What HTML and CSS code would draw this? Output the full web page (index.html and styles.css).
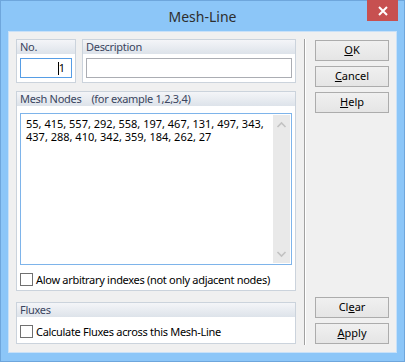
FILE: index.html
```html
<!DOCTYPE html>
<html>
<head>
<meta charset="utf-8">
<link rel="stylesheet" href="styles.css">
</head>
<body>
<div class="window">
  <div class="titlebar">
    <span class="title">Mesh-Line</span>
    <div class="close">
      <svg width="12" height="10" viewBox="0 0 12 10"><path d="M2 1 L10 9 M10 1 L2 9" stroke="#fff" stroke-width="2"/></svg>
    </div>
  </div>
  <div class="client">
    <div class="left">
      <div class="row-top">
        <div class="group g-no">
          <div class="ghead">No.</div>
          <div class="gbody">
            <div class="input focus"><span class="caret"></span>1</div>
          </div>
        </div>
        <div class="group g-desc">
          <div class="ghead">Description</div>
          <div class="gbody">
            <div class="input"></div>
          </div>
        </div>
      </div>
      <div class="group g-mesh">
        <div class="ghead">Mesh Nodes<span class="gap"></span>(for example 1,2,3,4)</div>
        <div class="gbody mesh-body">
          <div class="memo">
            <div class="memo-text">
              <div class="line">55, 415, 557, 292, 558, 197, 467, 131, 497, 343,</div>
              <div class="line">437, 288, 410, 342, 359, 184, 262, 27</div>
            </div>
            <div class="scroll">
              <svg width="17" height="12" viewBox="0 0 17 12"><path d="M4.5 8 L8.5 4 L12.5 8" stroke="#c2c2c2" stroke-width="1.6" fill="none"/></svg>
              <svg width="17" height="12" viewBox="0 0 17 12"><path d="M4.5 4 L8.5 8 L12.5 4" stroke="#c2c2c2" stroke-width="1.6" fill="none"/></svg>
            </div>
          </div>
          <label class="check"><span class="box"></span>Alow arbitrary indexes (not only adjacent nodes)</label>
        </div>
      </div>
      <div class="group g-flux">
        <div class="ghead">Fluxes</div>
        <div class="gbody flux-body">
          <label class="check"><span class="box"></span>Calculate Fluxes across this Mesh-Line</label>
        </div>
      </div>
    </div>
    <div class="sep"></div>
    <div class="buttons">
      <div class="btn"><u>O</u>K</div>
      <div class="btn"><u>C</u>ancel</div>
      <div class="btn"><u>H</u>elp</div>
      <div class="btn push">Cl<u>e</u>ar</div>
      <div class="btn"><u>A</u>pply</div>
    </div>
  </div>
</div>
</body>
</html>
```
FILE: styles.css
```css
* { box-sizing: border-box; }
html, body { margin: 0; padding: 0; }
body {
  font-family: "Noto Sans", "Open Sans", sans-serif;
  font-size: 11px;
  color: #000;
  background: #fff;
}
.window {
  width: 405px;
  height: 362px;
  background: #8cc6f8;
  border: 1px solid #6ea6dc;
  display: flex;
  flex-direction: column;
}
.titlebar {
  height: 30px;
  position: relative;
  display: flex;
  align-items: center;
  justify-content: center;
}
.title {
  font-size: 14px;
  color: #2e2e2e;
}
.close {
  position: absolute;
  top: -1px;
  right: 6px;
  width: 31px;
  height: 21px;
  background: #c75050;
  display: flex;
  align-items: center;
  justify-content: center;
}
.client {
  margin: 0 7px 0 7px;
  height: 322px;
  background: #f0f0f0;
  border: 1px solid #c9e1f8;
  display: flex;
  padding: 7px 8px 8px 7px;
}
.left {
  width: 280px;
  flex-shrink: 0;
  display: flex;
  flex-direction: column;
}
.row-top {
  display: flex;
  gap: 6px;
  height: 44px;
}
.group {
  border: 1px solid #cbd3dc;
  background: #fff;
  display: flex;
  flex-direction: column;
}
.ghead {
  height: 14px;
  background: linear-gradient(#f4f5f8, #dde3ea);
  color: #3a4560;
  padding-left: 3px;
  line-height: 13px;
  white-space: nowrap;
  letter-spacing: -0.3px;
}
.gap { display: inline-block; width: 10px; }
.g-no { width: 60px; }
.g-desc { flex: 1; }
.gbody {
  padding: 4px 3px 3px 3px;
  flex: 1;
}
.input {
  height: 20px;
  border: 1px solid #abadb3;
  background: #fff;
  line-height: 18px;
  text-align: right;
  padding-right: 6px;
}
.input.focus { border-color: #569de5; }
.caret {
  display: inline-block;
  width: 1px;
  height: 13px;
  background: #000;
  vertical-align: -3px;
}
.g-mesh {
  margin-top: 8px;
  height: 201px;
}
.mesh-body { padding-top: 7px; }
.memo {
  height: 152px;
  border: 1px solid #7eb4ea;
  display: flex;
}
.memo-text {
  flex: 1;
  padding: 3px 0 0 5px;
  white-space: nowrap;
}
.line {
  height: 13px;
  line-height: 13px;
}
.scroll {
  width: 17px;
  flex-shrink: 0;
  background: #e9e9e9;
  margin: 1px 1px 1px 0;
  display: flex;
  flex-direction: column;
  justify-content: space-between;
  padding: 4px 0 3px 0;
}
.scroll svg { display: block; }
.check {
  display: flex;
  align-items: center;
  gap: 3px;
  height: 15px;
  white-space: nowrap;
  letter-spacing: -0.3px;
}
.mesh-body .check { margin-top: 7px; }
.box {
  flex-shrink: 0;
  width: 13px;
  height: 13px;
  border: 1px solid #707070;
  background: #fff;
  display: inline-block;
}
.g-flux {
  margin-top: 11px;
  height: 42px;
}
.flux-body { padding-top: 7px; }
.sep {
  flex-shrink: 0;
  width: 2px;
  margin-left: 8px;
  border-left: 1px solid #a0a0a0;
  border-right: 1px solid #ffffff;
  height: 306px;
}
.buttons {
  flex-shrink: 0;
  margin-left: 9px;
  width: 74px;
  display: flex;
  flex-direction: column;
  gap: 5px;
  padding-top: 1px;
}
.btn {
  height: 21px;
  border: 1px solid #acacac;
  background: linear-gradient(#f0f0f0, #e5e5e5);
  text-align: center;
  line-height: 18px;
}
.btn.push { margin-top: auto; }
```
